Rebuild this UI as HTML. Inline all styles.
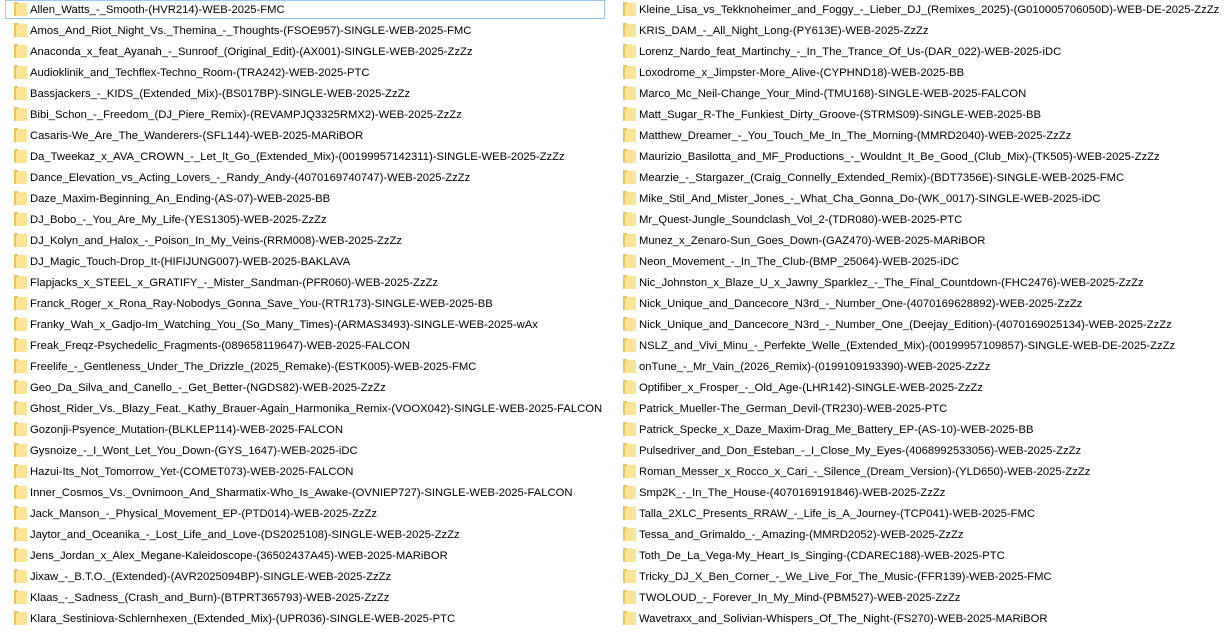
<!DOCTYPE html>
<html><head><meta charset="utf-8"><style>
body{margin:0;width:1226px;height:638px;background:#fff;overflow:hidden;font-family:"Liberation Sans",sans-serif;font-size:11.25px;color:#000;position:relative}
.c{position:absolute;top:0}
.r{height:21px;line-height:20px;white-space:nowrap;position:relative;padding-left:16px}
.r i{position:absolute;left:0;top:3px;width:13px;height:13px;background:#fce495;border-left:2px solid #e8c360;box-sizing:border-box}
.r i:after{content:"";position:absolute;left:-2px;top:-1px;width:4px;height:2px;background:#e8c360}
.f{position:absolute;left:5px;top:0;width:600px;height:19px;border:1px solid #99c9ef;box-sizing:border-box}
</style></head><body>
<div class="f"></div>
<div class="c" style="left:14px">
<div class="r"><i></i>Allen_Watts_-_Smooth-(HVR214)-WEB-2025-FMC</div>
<div class="r"><i></i>Amos_And_Riot_Night_Vs._Themina_-_Thoughts-(FSOE957)-SINGLE-WEB-2025-FMC</div>
<div class="r"><i></i>Anaconda_x_feat_Ayanah_-_Sunroof_(Original_Edit)-(AX001)-SINGLE-WEB-2025-ZzZz</div>
<div class="r"><i></i>Audioklinik_and_Techflex-Techno_Room-(TRA242)-WEB-2025-PTC</div>
<div class="r"><i></i>Bassjackers_-_KIDS_(Extended_Mix)-(BS017BP)-SINGLE-WEB-2025-ZzZz</div>
<div class="r"><i></i>Bibi_Schon_-_Freedom_(DJ_Piere_Remix)-(REVAMPJQ3325RMX2)-WEB-2025-ZzZz</div>
<div class="r"><i></i>Casaris-We_Are_The_Wanderers-(SFL144)-WEB-2025-MARiBOR</div>
<div class="r"><i></i>Da_Tweekaz_x_AVA_CROWN_-_Let_It_Go_(Extended_Mix)-(00199957142311)-SINGLE-WEB-2025-ZzZz</div>
<div class="r"><i></i>Dance_Elevation_vs_Acting_Lovers_-_Randy_Andy-(4070169740747)-WEB-2025-ZzZz</div>
<div class="r"><i></i>Daze_Maxim-Beginning_An_Ending-(AS-07)-WEB-2025-BB</div>
<div class="r"><i></i>DJ_Bobo_-_You_Are_My_Life-(YES1305)-WEB-2025-ZzZz</div>
<div class="r"><i></i>DJ_Kolyn_and_Halox_-_Poison_In_My_Veins-(RRM008)-WEB-2025-ZzZz</div>
<div class="r"><i></i>DJ_Magic_Touch-Drop_It-(HIFIJUNG007)-WEB-2025-BAKLAVA</div>
<div class="r"><i></i>Flapjacks_x_STEEL_x_GRATIFY_-_Mister_Sandman-(PFR060)-WEB-2025-ZzZz</div>
<div class="r"><i></i>Franck_Roger_x_Rona_Ray-Nobodys_Gonna_Save_You-(RTR173)-SINGLE-WEB-2025-BB</div>
<div class="r"><i></i>Franky_Wah_x_Gadjo-Im_Watching_You_(So_Many_Times)-(ARMAS3493)-SINGLE-WEB-2025-wAx</div>
<div class="r"><i></i>Freak_Freqz-Psychedelic_Fragments-(089658119647)-WEB-2025-FALCON</div>
<div class="r"><i></i>Freelife_-_Gentleness_Under_The_Drizzle_(2025_Remake)-(ESTK005)-WEB-2025-FMC</div>
<div class="r"><i></i>Geo_Da_Silva_and_Canello_-_Get_Better-(NGDS82)-WEB-2025-ZzZz</div>
<div class="r"><i></i>Ghost_Rider_Vs._Blazy_Feat._Kathy_Brauer-Again_Harmonika_Remix-(VOOX042)-SINGLE-WEB-2025-FALCON</div>
<div class="r"><i></i>Gozonji-Psyence_Mutation-(BLKLEP114)-WEB-2025-FALCON</div>
<div class="r"><i></i>Gysnoize_-_I_Wont_Let_You_Down-(GYS_1647)-WEB-2025-iDC</div>
<div class="r"><i></i>Hazui-Its_Not_Tomorrow_Yet-(COMET073)-WEB-2025-FALCON</div>
<div class="r"><i></i>Inner_Cosmos_Vs._Ovnimoon_And_Sharmatix-Who_Is_Awake-(OVNIEP727)-SINGLE-WEB-2025-FALCON</div>
<div class="r"><i></i>Jack_Manson_-_Physical_Movement_EP-(PTD014)-WEB-2025-ZzZz</div>
<div class="r"><i></i>Jaytor_and_Oceanika_-_Lost_Life_and_Love-(DS2025108)-SINGLE-WEB-2025-ZzZz</div>
<div class="r"><i></i>Jens_Jordan_x_Alex_Megane-Kaleidoscope-(36502437A45)-WEB-2025-MARiBOR</div>
<div class="r"><i></i>Jixaw_-_B.T.O._(Extended)-(AVR2025094BP)-SINGLE-WEB-2025-ZzZz</div>
<div class="r"><i></i>Klaas_-_Sadness_(Crash_and_Burn)-(BTPRT365793)-WEB-2025-ZzZz</div>
<div class="r"><i></i>Klara_Sestiniova-Schlernhexen_(Extended_Mix)-(UPR036)-SINGLE-WEB-2025-PTC</div>
</div>
<div class="c" style="left:623px">
<div class="r"><i></i>Kleine_Lisa_vs_Tekknoheimer_and_Foggy_-_Lieber_DJ_(Remixes_2025)-(G010005706050D)-WEB-DE-2025-ZzZz</div>
<div class="r"><i></i>KRIS_DAM_-_All_Night_Long-(PY613E)-WEB-2025-ZzZz</div>
<div class="r"><i></i>Lorenz_Nardo_feat_Martinchy_-_In_The_Trance_Of_Us-(DAR_022)-WEB-2025-iDC</div>
<div class="r"><i></i>Loxodrome_x_Jimpster-More_Alive-(CYPHND18)-WEB-2025-BB</div>
<div class="r"><i></i>Marco_Mc_Neil-Change_Your_Mind-(TMU168)-SINGLE-WEB-2025-FALCON</div>
<div class="r"><i></i>Matt_Sugar_R-The_Funkiest_Dirty_Groove-(STRMS09)-SINGLE-WEB-2025-BB</div>
<div class="r"><i></i>Matthew_Dreamer_-_You_Touch_Me_In_The_Morning-(MMRD2040)-WEB-2025-ZzZz</div>
<div class="r"><i></i>Maurizio_Basilotta_and_MF_Productions_-_Wouldnt_It_Be_Good_(Club_Mix)-(TK505)-WEB-2025-ZzZz</div>
<div class="r"><i></i>Mearzie_-_Stargazer_(Craig_Connelly_Extended_Remix)-(BDT7356E)-SINGLE-WEB-2025-FMC</div>
<div class="r"><i></i>Mike_Stil_And_Mister_Jones_-_What_Cha_Gonna_Do-(WK_0017)-SINGLE-WEB-2025-iDC</div>
<div class="r"><i></i>Mr_Quest-Jungle_Soundclash_Vol_2-(TDR080)-WEB-2025-PTC</div>
<div class="r"><i></i>Munez_x_Zenaro-Sun_Goes_Down-(GAZ470)-WEB-2025-MARiBOR</div>
<div class="r"><i></i>Neon_Movement_-_In_The_Club-(BMP_25064)-WEB-2025-iDC</div>
<div class="r"><i></i>Nic_Johnston_x_Blaze_U_x_Jawny_Sparklez_-_The_Final_Countdown-(FHC2476)-WEB-2025-ZzZz</div>
<div class="r"><i></i>Nick_Unique_and_Dancecore_N3rd_-_Number_One-(4070169628892)-WEB-2025-ZzZz</div>
<div class="r"><i></i>Nick_Unique_and_Dancecore_N3rd_-_Number_One_(Deejay_Edition)-(4070169025134)-WEB-2025-ZzZz</div>
<div class="r"><i></i>NSLZ_and_Vivi_Minu_-_Perfekte_Welle_(Extended_Mix)-(00199957109857)-SINGLE-WEB-DE-2025-ZzZz</div>
<div class="r"><i></i>onTune_-_Mr_Vain_(2026_Remix)-(0199109193390)-WEB-2025-ZzZz</div>
<div class="r"><i></i>Optifiber_x_Frosper_-_Old_Age-(LHR142)-SINGLE-WEB-2025-ZzZz</div>
<div class="r"><i></i>Patrick_Mueller-The_German_Devil-(TR230)-WEB-2025-PTC</div>
<div class="r"><i></i>Patrick_Specke_x_Daze_Maxim-Drag_Me_Battery_EP-(AS-10)-WEB-2025-BB</div>
<div class="r"><i></i>Pulsedriver_and_Don_Esteban_-_I_Close_My_Eyes-(4068992533056)-WEB-2025-ZzZz</div>
<div class="r"><i></i>Roman_Messer_x_Rocco_x_Cari_-_Silence_(Dream_Version)-(YLD650)-WEB-2025-ZzZz</div>
<div class="r"><i></i>Smp2K_-_In_The_House-(4070169191846)-WEB-2025-ZzZz</div>
<div class="r"><i></i>Talla_2XLC_Presents_RRAW_-_Life_is_A_Journey-(TCP041)-WEB-2025-FMC</div>
<div class="r"><i></i>Tessa_and_Grimaldo_-_Amazing-(MMRD2052)-WEB-2025-ZzZz</div>
<div class="r"><i></i>Toth_De_La_Vega-My_Heart_Is_Singing-(CDAREC188)-WEB-2025-PTC</div>
<div class="r"><i></i>Tricky_DJ_X_Ben_Corner_-_We_Live_For_The_Music-(FFR139)-WEB-2025-FMC</div>
<div class="r"><i></i>TWOLOUD_-_Forever_In_My_Mind-(PBM527)-WEB-2025-ZzZz</div>
<div class="r"><i></i>Wavetraxx_and_Solivian-Whispers_Of_The_Night-(FS270)-WEB-2025-MARiBOR</div>
</div>
</body></html>
